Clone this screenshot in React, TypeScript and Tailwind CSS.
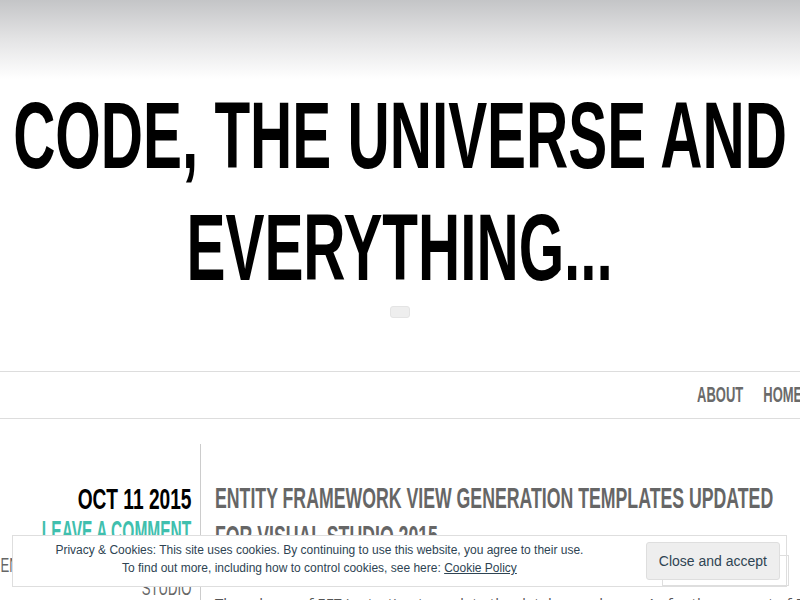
const narrow = "font-['Liberation_Sans',Arial,sans-serif]";

const categories = ["ENTITY FRAMEWORK, VISUAL", "STUDIO"];

export default function App() {
  return (
    <div className={`min-h-screen bg-white ${narrow} overflow-hidden`}>
      {/* header */}
      <div className="h-[79px] bg-linear-to-b from-[#c4c5c7] via-[#e4e4e5] to-white" />
      <h1 className="flex flex-col items-center overflow-hidden text-[95px] leading-[112px] font-bold text-black">
        <span className="whitespace-nowrap scale-x-[0.615]">CODE, THE UNIVERSE AND</span>
        <span className="whitespace-nowrap scale-x-[0.615]">EVERYTHING...</span>
      </h1>
      <div className="flex justify-center mt-[3px]">
        <div className="w-[20px] h-[12px] rounded-[3px] bg-[#eeeeee] border border-[#e4e4e4]" />
      </div>

      {/* nav */}
      <nav className="mt-[53px] border-y border-[#dddddd] h-[48px] flex justify-end overflow-hidden">
        <ul className="flex gap-[34px] origin-right scale-x-[0.59] -mr-[2px] text-[22px] leading-[46px] font-bold text-[#6a6a6a] whitespace-nowrap">
          <li>ABOUT</li>
          <li>HOME</li>
        </ul>
      </nav>

      {/* post */}
      <div className="mt-[25px] flex">
        <div className="w-[200px] shrink-0 pr-[9px] pt-[39px]">
          <div className="flex justify-end text-[29px] leading-[32px] font-bold text-black">
            <span className="whitespace-nowrap origin-right scale-x-[0.66]">OCT 11 2015</span>
          </div>
          <div className="flex justify-end text-[29px] leading-[32px] font-bold text-[#40bfae]">
            <span className="whitespace-nowrap origin-right scale-x-[0.535]">LEAVE A COMMENT</span>
          </div>
          <div className="mt-[6px] text-[21px] leading-[23px] text-[#666666]">
            {categories.map((c) => (
              <div key={c} className="flex justify-end">
                <span className="whitespace-nowrap origin-right scale-x-[0.625]">{c}</span>
              </div>
            ))}
          </div>
        </div>
        <div className="flex-1 border-l border-[#cccccc] pl-[14px] pt-[35px] min-h-[400px]">
          <h2 className="text-[30px] leading-[38px] font-bold text-[#666666]">
            <span className="block whitespace-nowrap origin-left scale-x-[0.59]">
              ENTITY FRAMEWORK VIEW GENERATION TEMPLATES UPDATED
            </span>
            <span className="block whitespace-nowrap origin-left scale-x-[0.59]">
              FOR VISUAL STUDIO 2015
            </span>
          </h2>
          <p className="mt-[36px] pr-4 font-['Open_Sans',sans-serif] text-[15px] leading-[24px] text-[#555555]">
            The release of EF7 is starting to update the database schema. As for the support of EF7 in the
            tooling, the view generation templates were updated so that they work with Visual Studio 2015.
          </p>
        </div>
      </div>

      {/* cookie banner */}
      <div className="fixed left-3 right-[13px] bottom-[13px] h-[52px] bg-white border border-[#dedede] flex items-center">
        <div className="absolute -right-[3px] top-[19px] w-[127px] h-[31px] border border-[#dedede] pointer-events-none" />
        <div className="flex-1 text-center text-[12px] leading-[18px] text-[#2e4453] -mt-[4px]">
          <p>Privacy &amp; Cookies: This site uses cookies. By continuing to use this website, you agree to their use.</p>
          <p>
            To find out more, including how to control cookies, see here:{" "}
            <a className="underline">Cookie Policy</a>
          </p>
        </div>
        <button className="relative z-10 mr-[6px] ml-[20px] h-[38px] px-[12px] bg-[#eeeeee] border border-[#dedede] rounded-[3px] text-[14px] text-[#2e4453]">
          Close and accept
        </button>
      </div>
    </div>
  );
}
